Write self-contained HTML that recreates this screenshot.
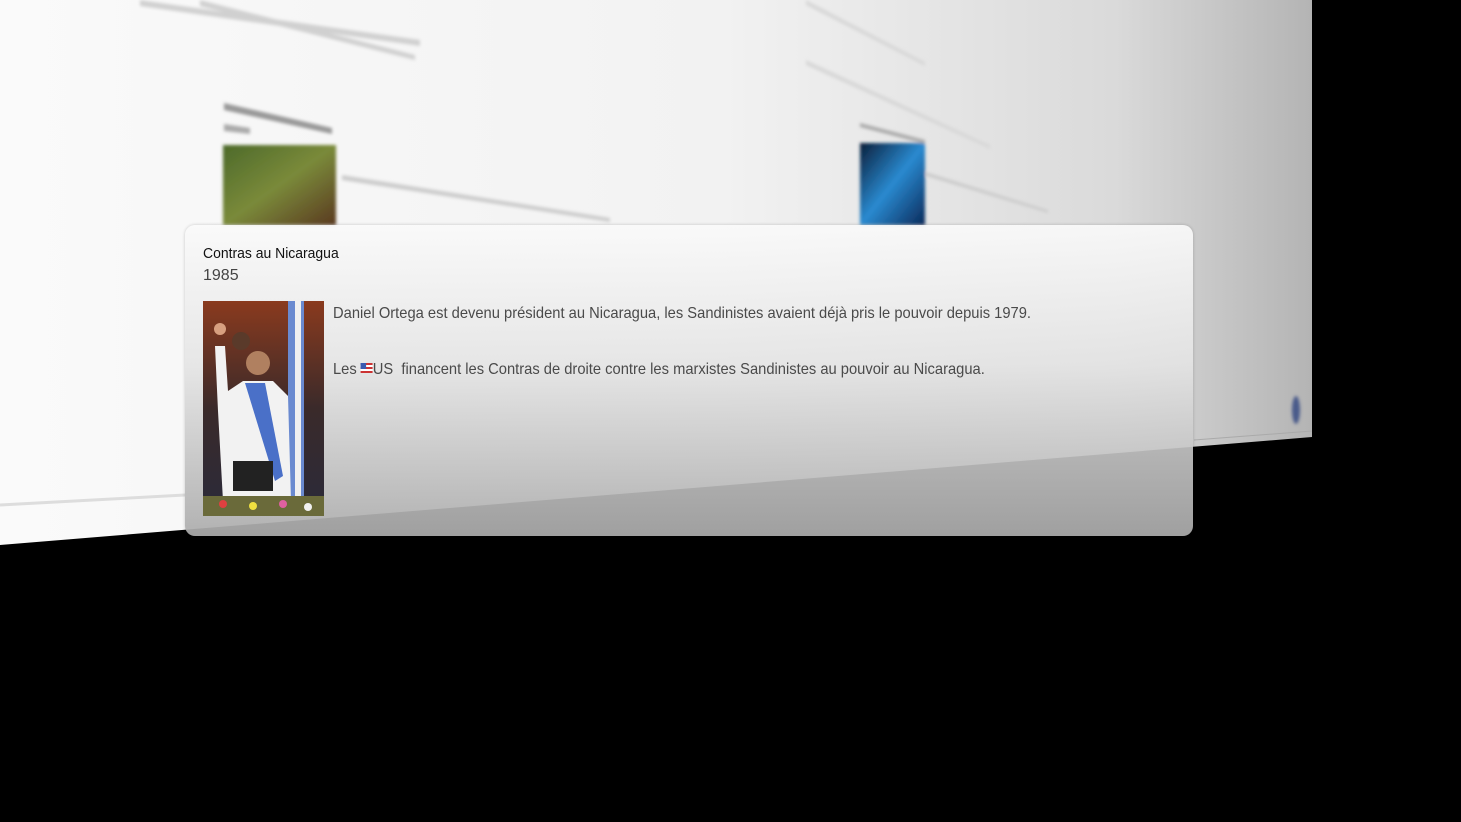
<!DOCTYPE html>
<html><head><meta charset="utf-8"><style>
html,body{margin:0;padding:0;width:1461px;height:822px;background:#000;overflow:hidden;font-family:"Liberation Sans","DejaVu Sans",sans-serif;}
.abs{position:absolute}
.card{position:absolute;left:185px;top:225px;width:1008px;height:311px;border-radius:10px;overflow:hidden;
background:linear-gradient(180deg,rgba(250,250,250,.9) 0%,rgba(228,228,228,.88) 45%,rgba(172,172,172,.93) 100%);
box-shadow:0 0 3px rgba(0,0,0,.2);}
.t{position:absolute;white-space:nowrap;transform-origin:0 0;}
</style></head><body>
<svg class="abs" style="left:0;top:0" width="1461" height="822">
<defs>
<linearGradient id="pl" x1="0" y1="0" x2="1" y2="0">
<stop offset="0" stop-color="#fafafa"/><stop offset="0.55" stop-color="#f2f2f2"/><stop offset="0.85" stop-color="#dadada"/><stop offset="1" stop-color="#b4b4b4"/>
</linearGradient>
<linearGradient id="gr" x1="0" y1="0" x2="1" y2="1"><stop offset="0" stop-color="#4d6a2a"/><stop offset="0.5" stop-color="#7a8a3a"/><stop offset="1" stop-color="#5a3a20"/></linearGradient>
<linearGradient id="bl" x1="0" y1="0" x2="1" y2="1"><stop offset="0" stop-color="#0a1e3a"/><stop offset="0.5" stop-color="#2a8ad0"/><stop offset="1" stop-color="#0a2a5a"/></linearGradient>
<filter id="bf"><feGaussianBlur stdDeviation="1.5"/></filter>
</defs>
<polygon points="0,0 1312,0 1312,437 0,545" fill="url(#pl)"/>
<line x1="0" y1="505" x2="185" y2="495" stroke="#ddd" stroke-width="3"/>
<g filter="url(#bf)">
<rect x="223" y="145" width="113" height="80" fill="url(#gr)"/>
<rect x="860" y="143" width="65" height="82" fill="url(#bl)"/>
<polygon points="224,103 332,128 332,134 224,110" fill="#999"/>
<polygon points="224,124 250,128 250,134 224,131" fill="#aaa"/>
<polygon points="342,175 610,218 610,222 342,180" fill="#ccc"/>
<polygon points="140,0 420,40 420,46 140,6" fill="#d0d0d0"/>
<polygon points="200,0 415,55 415,60 200,6" fill="#d0d0d0"/>
<polygon points="806,60 990,145 990,149 806,65" fill="#d8d8d8"/>
<polygon points="806,0 925,62 925,66 806,5" fill="#d8d8d8"/>
<polygon points="926,172 1048,210 1048,213 926,176" fill="#ccc"/>
<polygon points="860,123 925,140 925,144 860,127" fill="#aaa"/>
<ellipse cx="1296" cy="410" rx="4" ry="14" fill="#4a5a8a"/>
</g>
<line x1="1194" y1="440" x2="1312" y2="431" stroke="#aaa" stroke-width="1"/>
</svg>
<div class="card">
<div class="t" style="left:18px;top:20px;font-size:15px;color:#111;transform:scaleX(0.93)">Contras au Nicaragua</div>
<div class="t" style="left:18px;top:42px;font-size:16px;color:#444;">1985</div>
<svg class="abs" style="left:18px;top:76px" width="121" height="215">
<defs><linearGradient id="bg" x1="0" y1="0" x2="0" y2="1"><stop offset="0" stop-color="#8a3a1e"/><stop offset="0.5" stop-color="#3a2a2a"/><stop offset="1" stop-color="#2a2a3a"/></linearGradient></defs>
<rect width="121" height="215" fill="url(#bg)"/>
<rect x="85" y="0" width="16" height="215" fill="#6a8ad0"/>
<rect x="92" y="0" width="6" height="215" fill="#f0f0f0"/>
<circle cx="55" cy="62" r="12" fill="#b08060"/>
<circle cx="38" cy="40" r="9" fill="#5a3a2a"/>
<path d="M12,45 L22,45 L25,90 L40,80 L70,80 L85,95 L88,200 L20,200 L15,110 Z" fill="#f2f2f2"/>
<path d="M42,82 L62,82 L80,175 L72,180 Z" fill="#4a70c8"/>
<circle cx="17" cy="28" r="6" fill="#d8a080"/>
<rect x="30" y="160" width="40" height="30" fill="#222"/>
<rect x="0" y="195" width="121" height="20" fill="#6a6a3a"/>
<circle cx="20" cy="203" r="4" fill="#e04040"/><circle cx="50" cy="205" r="4" fill="#f0e040"/><circle cx="80" cy="203" r="4" fill="#e060a0"/><circle cx="105" cy="206" r="4" fill="#f0f0f0"/>
</svg>
<div class="t" style="left:148px;top:80px;font-size:16px;color:#4a4a4a;transform:scaleX(0.92)">Daniel Ortega est devenu président au Nicaragua, les Sandinistes avaient déjà pris le pouvoir depuis 1979.</div>
<div class="t" style="left:148px;top:136px;font-size:16px;color:#4a4a4a;transform:scaleX(0.92)">Les <span style="display:inline-block;width:13px;height:10px;background:linear-gradient(#c33 0 20%,#fff 20% 40%,#c33 40% 60%,#fff 60% 80%,#c33 80%);position:relative;vertical-align:1px"><span style="position:absolute;left:0;top:0;width:6px;height:6px;background:#3a5ab0"></span></span>US &nbsp;financent les Contras de droite contre les marxistes Sandinistes au pouvoir au Nicaragua.</div>
</div>
</body></html>
